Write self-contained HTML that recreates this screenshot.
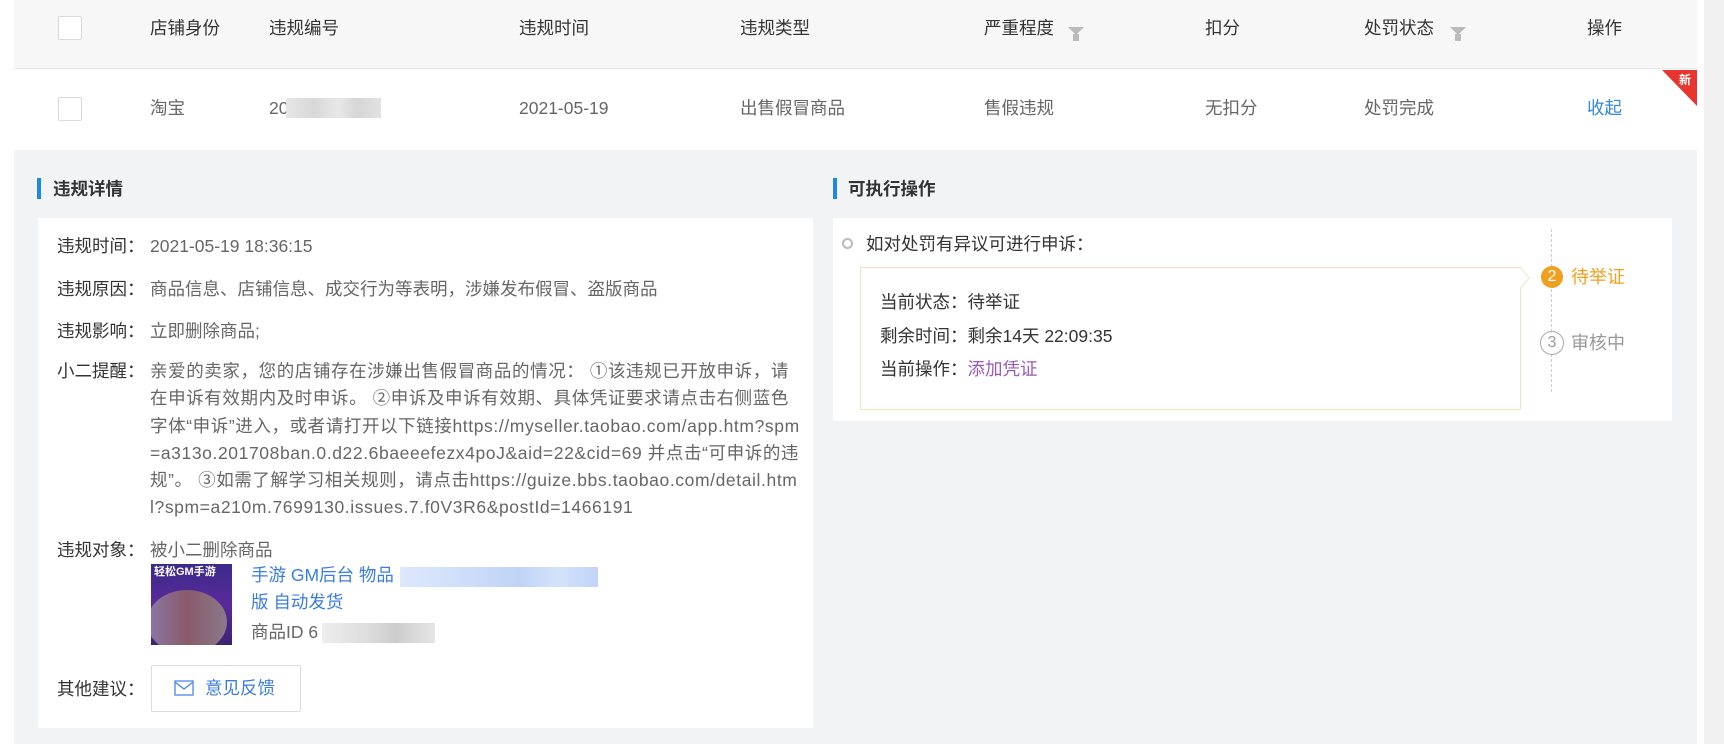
<!DOCTYPE html>
<html><head><meta charset="utf-8"><style>
*{margin:0;padding:0;box-sizing:border-box}
body{width:1724px;height:744px;background:#fff;font-family:"Liberation Sans","Noto Sans CJK SC",sans-serif;position:relative;overflow:hidden;color:#333;line-height:22px}
.a{position:absolute;white-space:nowrap}
.hd{font-size:17.5px;color:#333}
.v{font-size:17.5px;color:#666}
.cb{position:absolute;width:24px;height:24px;border:1px solid #d9d9d9;border-radius:2px;background:#fff}
.fil{position:absolute;width:0;height:0;border-left:8px solid transparent;border-right:8px solid transparent;border-top:8px solid #bbb}
.fil:after{content:"";position:absolute;left:-3px;top:-1px;width:6px;height:7px;background:#bbb}
.lbl{font-size:17.5px;color:#333}
.val{font-size:17.5px;color:#666}
.blur{position:absolute}
</style></head><body>
<div class="a" style="left:14px;top:0;width:1683px;height:69px;background:#f7f7f7;border-bottom:1px solid #e8e8e8"></div>
<div class="a" style="left:14px;top:70px;width:1683px;height:80px;background:#fff"></div>
<div class="a" style="left:1704px;top:0;width:20px;height:744px;background:#f1f1f1"></div>
<div class="a" style="left:14px;top:150px;width:1683px;height:594px;background:#f2f3f5"></div>

<div class="cb" style="left:58px;top:16px"></div>
<div class="a hd" style="left:150px;top:17px">店铺身份</div>
<div class="a hd" style="left:269px;top:17px">违规编号</div>
<div class="a hd" style="left:519px;top:17px">违规时间</div>
<div class="a hd" style="left:740px;top:17px">违规类型</div>
<div class="a hd" style="left:984px;top:17px">严重程度</div>
<div class="fil" style="left:1068px;top:27px"></div>
<div class="a hd" style="left:1205px;top:17px">扣分</div>
<div class="a hd" style="left:1364px;top:17px">处罚状态</div>
<div class="fil" style="left:1450px;top:27px"></div>
<div class="a hd" style="left:1587px;top:17px">操作</div>

<div class="cb" style="left:58px;top:97px"></div>
<div class="a v" style="left:150px;top:97px">淘宝</div>
<div class="a v" style="left:269px;top:97px">20</div>
<div class="blur" style="left:286px;top:98px;width:95px;height:20px;background:linear-gradient(90deg,#e6e6e6,#d8d8d8 30%,#e8e8e8 55%,#d6d6d6 75%,#e2e2e2)"></div>
<div class="a v" style="left:519px;top:97px">2021-05-19</div>
<div class="a v" style="left:740px;top:97px">出售假冒商品</div>
<div class="a v" style="left:984px;top:97px">售假违规</div>
<div class="a v" style="left:1205px;top:97px">无扣分</div>
<div class="a v" style="left:1364px;top:97px">处罚完成</div>
<div class="a" style="left:1587px;top:97px;font-size:17.5px;color:#3089dc">收起</div>
<svg class="a" style="left:1662px;top:70px" width="35" height="36"><polygon points="0,0 35,0 35,36" fill="#e8362f"/><text x="17" y="14" font-size="12" fill="#fff" font-family="Noto Sans CJK SC" font-weight="bold">新</text></svg>

<div class="a" style="left:37px;top:178px;width:4px;height:21px;background:#1e88e5"></div>
<div class="a" style="left:53px;top:178px;font-size:17.5px;font-weight:bold;color:#333">违规详情</div>
<div class="a" style="left:833px;top:178px;width:4px;height:21px;background:#1e88e5"></div>
<div class="a" style="left:848px;top:178px;font-size:17.5px;font-weight:bold;color:#333">可执行操作</div>

<div class="a" style="left:38px;top:218px;width:775px;height:510px;background:#fff"></div>
<div class="a lbl" style="left:57px;top:235px">违规时间：</div><div class="a val" style="left:150px;top:235px">2021-05-19 18:36:15</div>
<div class="a lbl" style="left:57px;top:278px">违规原因：</div><div class="a val" style="left:150px;top:278px">商品信息、店铺信息、成交行为等表明，涉嫌发布假冒、盗版商品</div>
<div class="a lbl" style="left:57px;top:320px">违规影响：</div><div class="a val" style="left:150px;top:320px">立即删除商品;</div>
<div class="a lbl" style="left:57px;top:360px">小二提醒：</div>
<div class="a val" style="left:150px;top:358px;line-height:27.3px;width:660px;white-space:normal;letter-spacing:0.6px">
<div style="white-space:nowrap">亲爱的卖家，您的店铺存在涉嫌出售假冒商品的情况： ①该违规已开放申诉，请</div>
<div style="white-space:nowrap">在申诉有效期内及时申诉。 ②申诉及申诉有效期、具体凭证要求请点击右侧蓝色</div>
<div style="white-space:nowrap">字体“申诉”进入，或者请打开以下链接https://myseller.taobao.com/app.htm?spm</div>
<div style="white-space:nowrap">=a313o.201708ban.0.d22.6baeeefezx4poJ&amp;aid=22&amp;cid=69 并点击“可申诉的违</div>
<div style="white-space:nowrap">规”。 ③如需了解学习相关规则，请点击https://guize.bbs.taobao.com/detail.htm</div>
<div style="white-space:nowrap">l?spm=a210m.7699130.issues.7.f0V3R6&amp;postId=1466191</div>
</div>
<div class="a lbl" style="left:57px;top:539px">违规对象：</div><div class="a val" style="left:150px;top:539px">被小二删除商品</div>
<div class="a" style="left:151px;top:564px;width:81px;height:81px;background:linear-gradient(180deg,#3a2a8a,#5a2a9a 50%,#3a2470);overflow:hidden">
<div style="color:#fff;font-size:11px;font-weight:bold;padding:0 0 0 3px;line-height:16px">轻松GM手游</div>
<div style="position:absolute;left:-4px;top:26px;width:80px;height:64px;border-radius:50%;background:linear-gradient(90deg,#8a7aa8,#8a5a6a,#8a7a8a)"></div>
</div>
<div class="a" style="left:251px;top:564px;font-size:17.5px;color:#3b7ddd">手游 GM后台 物品</div>
<div class="blur" style="left:400px;top:567px;width:198px;height:20px;background:linear-gradient(90deg,#dde8fb,#cfdefa 30%,#c0d4f6 60%,#d4e2fb 80%,#c0d4f8)"></div>
<div class="a" style="left:251px;top:591px;font-size:17.5px;color:#3b7ddd">版 自动发货</div>
<div class="a val" style="left:251px;top:621px">商品ID 6</div>
<div class="blur" style="left:322px;top:623px;width:113px;height:20px;background:linear-gradient(90deg,#eee,#ddd 40%,#ccc 65%,#e6e6e6)"></div>
<div class="a lbl" style="left:57px;top:678px">其他建议：</div>
<div class="a" style="left:151px;top:665px;width:150px;height:47px;border:1px solid #ddd;border-radius:2px;background:#fff"></div>
<svg class="a" style="left:174px;top:680px" width="20" height="16"><rect x="1" y="1" width="18" height="14" fill="none" stroke="#4a86e8" stroke-width="1.3"/><path d="M1 2 L10 9 L19 2" fill="none" stroke="#4a86e8" stroke-width="1.3"/></svg>
<div class="a" style="left:205px;top:677px;font-size:17.5px;color:#3b7ddd">意见反馈</div>

<div class="a" style="left:833px;top:218px;width:839px;height:203px;background:#fff"></div>
<div class="a" style="left:842px;top:238px;width:11px;height:11px;border:2.5px solid #bbb;border-radius:50%"></div>
<div class="a" style="left:866px;top:233px;font-size:17.5px;color:#333">如对处罚有异议可进行申诉：</div>
<div class="a" style="left:860px;top:267px;width:661px;height:143px;border:1px solid #f3e3bd;background:#fff"></div>
<svg class="a" style="left:1520px;top:265px" width="12" height="26"><path d="M0 2 L9 13 L0 24" fill="#fff" stroke="#f3e3bd" stroke-width="1"/></svg>
<div class="a" style="left:880px;top:291px;font-size:17.5px;color:#333">当前状态：待举证</div>
<div class="a" style="left:880px;top:325px;font-size:17.5px;color:#333">剩余时间：剩余14天 22:09:35</div>
<div class="a" style="left:880px;top:358px;font-size:17.5px;color:#333">当前操作：<span style="color:#9b59b6">添加凭证</span></div>
<div class="a" style="left:1551px;top:229px;height:163px;border-left:1px dashed #ccc"></div>
<div class="a" style="left:1541px;top:266px;width:22px;height:22px;border-radius:50%;background:#f0a020;color:#fff;font-size:16px;text-align:center;line-height:22px">2</div>
<div class="a" style="left:1571px;top:266px;font-size:18px;color:#f0a020">待举证</div>
<div class="a" style="left:1540px;top:331px;width:24px;height:24px;border-radius:50%;border:1px solid #aaa;background:#fff;color:#999;font-size:16px;text-align:center;line-height:22px">3</div>
<div class="a" style="left:1571px;top:332px;font-size:18px;color:#999">审核中</div>
</body></html>
